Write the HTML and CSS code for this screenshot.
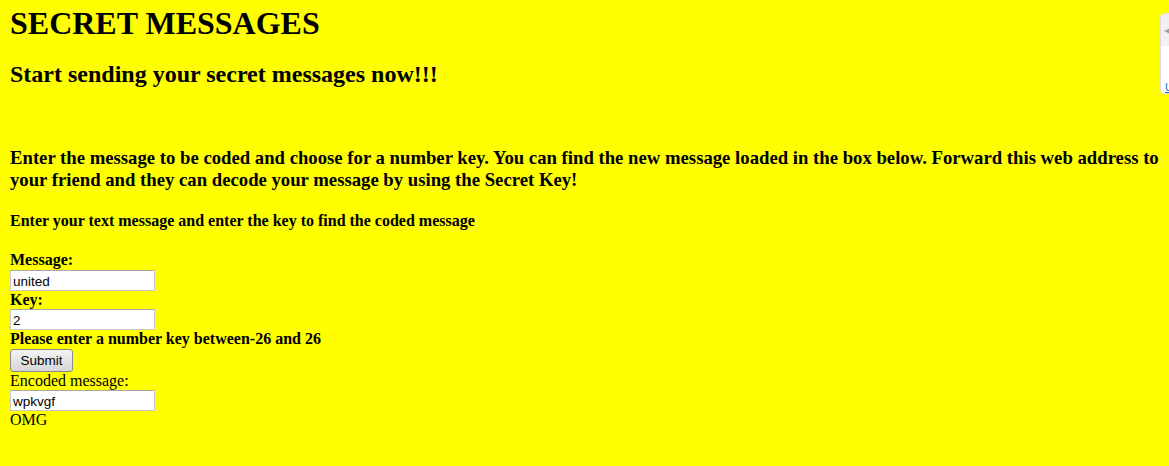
FILE: index.html
```html
<!DOCTYPE html>
<html>
<head>
<meta charset="utf-8">
<title>Secret Messages</title>
<link rel="stylesheet" href="styles.css">
</head>
<body class="page">
<h1 class="title">SECRET MESSAGES</h1>
<h2 class="subtitle">Start sending your secret messages now!!!</h2>
<h3 class="intro">Enter the message to be coded and choose for a number key. You can find the new message loaded in the box below. Forward this web address to your friend and they can decode your message by using the Secret Key!</h3>
<h4 class="hint">Enter your text message and enter the key to find the coded message</h4>
<form class="form">
  <label class="label" for="msg">Message:</label>
  <input class="field field-first" id="msg" type="text" value="united">
  <label class="label" for="key">Key:</label>
  <input class="field" id="key" type="text" value="2">
  <div class="label">Please enter a number key between-26 and 26</div>
  <div class="btn-row"><button class="btn" type="button">Submit</button></div>
  <div class="plain">Encoded message:</div>
  <input class="field" type="text" value="wpkvgf">
  <div class="plain">OMG</div>
</form>
<div class="widget">
  <div class="widget-head"><span class="widget-arrow"></span></div>
  <div class="widget-body"><a class="widget-link" href="#">U</a></div>
</div>
</body>
</html>
```
FILE: styles.css
```css
html, body {
  margin: 0;
  background: #ffff00;
}
.page {
  padding: 5px 0 0 10px;
  font-family: "Liberation Serif", "Times New Roman", serif;
  color: #000;
  min-height: 461px;
  position: relative;
  overflow: hidden;
}
.title {
  margin: 0;
  font-size: 32px;
  font-weight: bold;
  line-height: normal;
}
.subtitle {
  margin: 19px 0 0;
  font-size: 24px;
  font-weight: bold;
  line-height: normal;
}
.intro {
  margin: 59px 0 0;
  font-size: 18.72px;
  font-weight: bold;
  line-height: normal;
  padding-right: 2px;
}
.hint {
  margin: 21px 0 0;
  font-size: 16px;
  font-weight: bold;
  line-height: normal;
}
.form {
  margin-top: 21px;
  display: flex;
  flex-direction: column;
  align-items: flex-start;
}
.label {
  display: block;
  font-weight: bold;
  font-size: 16px;
  line-height: 18px;
  height: 18px;
}
.plain {
  font-size: 16px;
  line-height: 18px;
  height: 18px;
}
.field {
  box-sizing: border-box;
  width: 145px;
  height: 21px;
  margin: 0;
  padding: 1px 2px 0;
  border: 1px solid #c8c8c8;
  border-top-color: #a8a8a8;
  background: #fff;
  font-family: "Liberation Sans", Arial, sans-serif;
  font-size: 13.5px;
  color: #000;
  outline: none;
}
.field-first {
  margin-top: 1px;
}
.btn-row {
  margin-top: 1px;
  height: 23px;
}
.btn {
  box-sizing: border-box;
  width: 63px;
  height: 23px;
  margin: 0;
  padding: 0;
  border: 1px solid #8a8a8a;
  border-radius: 3px;
  background: linear-gradient(#f4f4f4, #e4e4e4 50%, #d6d6d6);
  font-family: "Liberation Sans", Arial, sans-serif;
  font-size: 13.5px;
  color: #000;
}
.widget {
  position: absolute;
  top: 13px;
  left: 1160px;
  width: 60px;
  height: 81px;
  box-sizing: border-box;
  border: 1px solid #dcdcdc;
  border-radius: 4px;
  background: #fff;
  overflow: hidden;
}
.widget-head {
  height: 32px;
  background: #f0f0f0;
  position: relative;
}
.widget-arrow {
  position: absolute;
  left: 3px;
  top: 14px;
  width: 0;
  height: 0;
  border-top: 3px solid transparent;
  border-bottom: 3px solid transparent;
  border-right: 6px solid #a0a0a0;
}
.widget-body {
  padding: 31px 0 0 4px;
}
.widget-link {
  font-family: "Liberation Sans", Arial, sans-serif;
  font-size: 11px;
  color: #1a73c8;
}
```
